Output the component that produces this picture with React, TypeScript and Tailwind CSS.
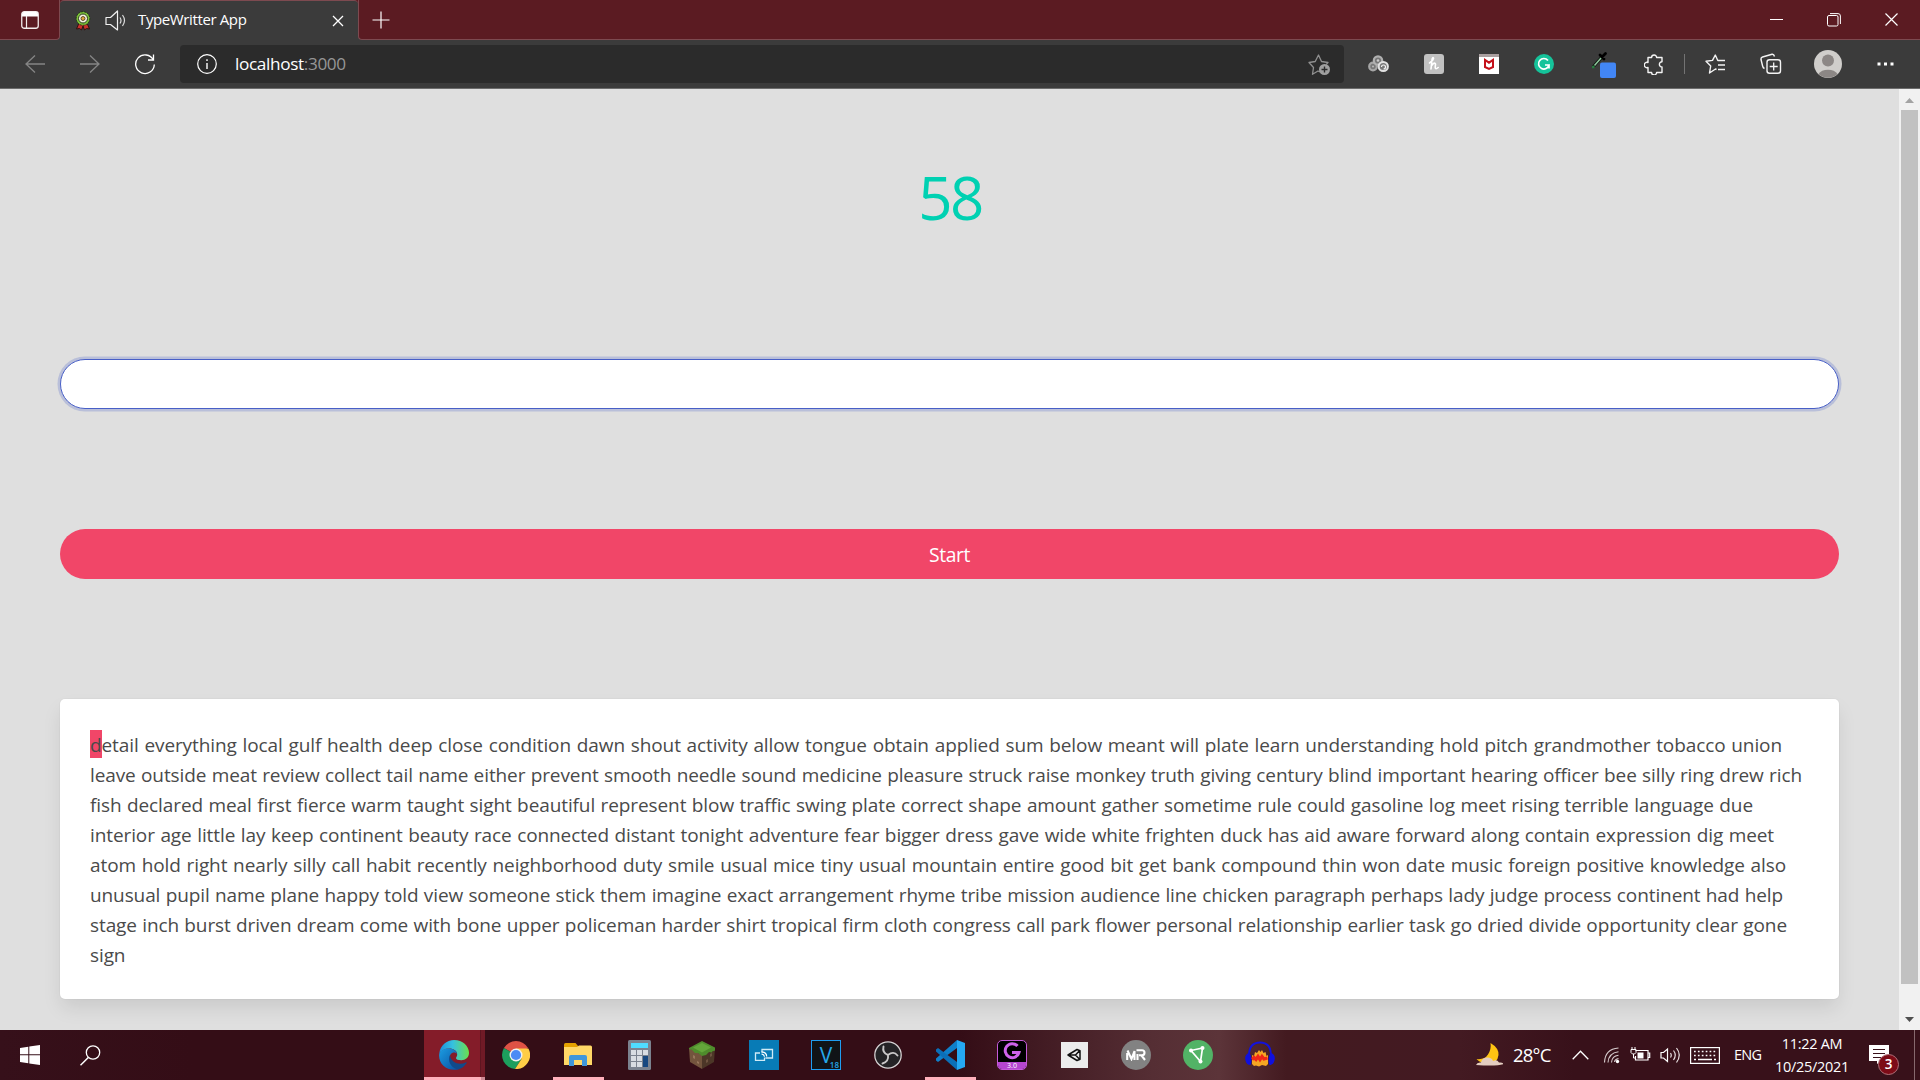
import type { ReactNode } from "react";

const lines: { text: string; width: string }[] = [
  { text: "etail everything local gulf health deep close condition dawn shout activity allow tongue obtain applied sum below meant will plate learn understanding hold pitch grandmother tobacco union", width: "w-[1692px]" },
  { text: "leave outside meat review collect tail name either prevent smooth needle sound medicine pleasure struck raise monkey truth giving century blind important hearing officer bee silly ring drew rich", width: "w-[1712px]" },
  { text: "fish declared meal first fierce warm taught sight beautiful represent blow traffic swing plate correct shape amount gather sometime rule could gasoline log meet rising terrible language due", width: "w-[1663px]" },
  { text: "interior age little lay keep continent beauty race connected distant tonight adventure fear bigger dress gave wide white frighten duck has aid aware forward along contain expression dig meet", width: "w-[1684px]" },
  { text: "atom hold right nearly silly call habit recently neighborhood duty smile usual mice tiny usual mountain entire good bit get bank compound thin won date music foreign positive knowledge also", width: "w-[1696px]" },
  { text: "unusual pupil name plane happy told view someone stick them imagine exact arrangement rhyme tribe mission audience line chicken paragraph perhaps lady judge process continent had help", width: "w-[1693px]" },
  { text: "stage inch burst driven dream come with bone upper policeman harder shirt tropical firm cloth congress call park flower personal relationship earlier task go dried divide opportunity clear gone", width: "w-[1697px]" },
  { text: "sign", width: "w-[37px]" },
];

function Svg({ w, h = w, children, className = "" }: { w: number; h?: number; children: ReactNode; className?: string }) {
  return (
    <svg width={w} height={h} viewBox={`0 0 ${w} ${h}`} fill="none" className={`shrink-0 ${className}`}>
      {children}
    </svg>
  );
}

function TitleBar() {
  return (
    <div className="flex h-10 shrink-0 bg-[#3b3b3b]">
      <div className="flex w-[60px] items-center justify-center rounded-br border-r border-b border-[#7d4a50] bg-[#5b1b22]">
        <Svg w={18}>
          <rect x="0.75" y="0.75" width="16.5" height="16.5" rx="2.5" stroke="#f3ecec" strokeWidth="1.3" />
          <path d="M1 3a2 2 0 0 1 2-2h12a2 2 0 0 1 2 2v2.500H1z" fill="#fff" />
          <path d="M5.500 5v12" stroke="#f3ecec" strokeWidth="1.200" />
        </Svg>
      </div>
      <div className="w-[298px] bg-[#5b1b22]">
        <div className="flex h-full items-center rounded-t border-t border-[#7d4a50] bg-[#3b3b3b] pl-[15px]">
          <Svg w={16} h={20}>
            <path d="M4 12l-2.500 6 3-.5L6.500 19 8 15l1.500 4 2-1.500 3 .5L12 12z" fill="#c8302c" stroke="#301010" strokeWidth="1" />
            <circle cx="8" cy="7.500" r="6.800" fill="#7cc23a" stroke="#1f3a12" strokeWidth="1" strokeDasharray="2 1" />
            <circle cx="8" cy="7.500" r="4.500" fill="#f4f1df" stroke="#2c3d1b" />
            <circle cx="8" cy="7.500" r="2" fill="#dfa63c" stroke="#40331a" strokeWidth=".8" />
          </Svg>
          <Svg w={21} className="ml-[14px]">
            <path d="M1 7.500h4.500L12.500 1v19L5.500 14.500H1z" stroke="#f1f1f1" strokeWidth="1.200" strokeLinejoin="round" />
            <path d="M15 7.500q2 3 0 6M17.500 5q4 5.500 0 11" stroke="#ddd" strokeWidth="1.200" />
          </Svg>
          <span className="ml-[12px] w-[180px] pb-[2px] text-[15px] tracking-[-0.38px] whitespace-nowrap text-white">TypeWritter App</span>
          <Svg w={12} className="ml-[14px]">
            <path d="M1 1l10 10M11 1L1 11" stroke="#fff" strokeWidth="1.300" />
          </Svg>
        </div>
      </div>
      <div className="flex flex-1 items-center rounded-bl border-b border-l border-[#7d4a50] bg-[#5b1b22] pl-[13px]">
        <Svg w={18}>
          <path d="M9 0.500v17M0.500 9h17" stroke="#fff" strokeWidth="1.200" />
        </Svg>
        <div className="ml-auto flex items-center">
          <div className="flex w-[57px] justify-center">
            <Svg w={13}><path d="M0 6.500h13" stroke="#fff" /></Svg>
          </div>
          <div className="flex w-[57px] justify-center">
            <Svg w={14}>
              <rect x="0.500" y="2.500" width="10.500" height="10.500" rx="1.500" stroke="#fff" />
              <path d="M3 .6h8a2.400 2.400 0 0 1 2.400 2.400v8" stroke="#fff" />
            </Svg>
          </div>
          <div className="flex w-[58px] justify-center">
            <Svg w={13}><path d="M.5.5l12 12M12.500.5l-12 12" stroke="#fff" strokeWidth="1.200" /></Svg>
          </div>
        </div>
      </div>
    </div>
  );
}

function Cell({ children, className = "w-[55px]" }: { children: ReactNode; className?: string }) {
  return <div className={`flex shrink-0 items-center justify-center ${className}`}>{children}</div>;
}

function Toolbar() {
  return (
    <div className="flex h-[49px] shrink-0 items-center border-b border-[#6c6c6c] bg-[#3b3b3b] pl-[7px]">
      <Cell>
        <Svg w={20} h={18}><path d="M10 .5L1 9l9 8.500M1 9h19" stroke="#858585" strokeWidth="1.300" /></Svg>
      </Cell>
      <Cell>
        <Svg w={20} h={18}><path d="M10 .5L19 9l-9 8.500M19 9H0" stroke="#858585" strokeWidth="1.300" /></Svg>
      </Cell>
      <Cell>
        <Svg w={22}>
          <path d="M19.300 7A9.300 9.300 0 1 0 20.300 11.500" stroke="#fff" strokeWidth="1.300" />
          <path d="M19.500 1.500V7H14" stroke="#fff" strokeWidth="1.300" />
        </Svg>
      </Cell>
      <div className="ml-[8px] flex h-[38px] w-[1164px] shrink-0 items-center rounded bg-[#2b2b2b] pr-[13px] pl-[17px]">
        <Svg w={20}>
          <circle cx="10" cy="10" r="9.300" stroke="#fff" strokeWidth="1.200" />
          <path d="M10 9v6M10 5.300v1.700" stroke="#fff" strokeWidth="1.400" />
        </Svg>
        <span className="ml-[18px] text-[17.200px] tracking-[-0.36px] text-white">
          localhost<span className="text-[#969696]">:3000</span>
        </span>
        <Svg w={23} className="ml-auto">
          <path d="M12 19l-2-1-5.500 3.300 1-6.800L1 9.500l6.200-1L10.500 2l3 6.500 6.500 1-1.800 2" stroke="#8f8f8f" strokeWidth="1.300" strokeLinejoin="round" />
          <circle cx="16.500" cy="16.500" r="5.500" fill="#a0a0a0" />
          <path d="M16.500 13.500v6M13.500 16.500h6" stroke="#2b2b2b" strokeWidth="1.400" />
        </Svg>
      </div>
      <Cell className="ml-[7px] w-[55px]">
        <Svg w={21} h={18}>
          <circle cx="5" cy="11.500" r="3.800" fill="#777" stroke="#a6a6a6" strokeWidth="2.200" />
          <circle cx="5" cy="11.500" r="1" fill="#bbb" />
          <circle cx="10" cy="5.500" r="4.200" fill="#777" stroke="#b0b0b0" strokeWidth="2.200" />
          <circle cx="10" cy="5.500" r="1.300" fill="#ccc" />
          <circle cx="15.300" cy="11.500" r="4.600" fill="#777" stroke="#e2e2e2" strokeWidth="2" />
          <path d="M13.500 12a2 2 0 1 1 2 2" stroke="#f2f2f2" strokeWidth="1.200" />
        </Svg>
      </Cell>
      <Cell>
        <Svg w={20}>
          <rect width="20" height="20" rx="3" fill="#c1c1c1" />
          <path d="M5.500 9Q9 7 9.500 4.500c0-1.500-1.300-1-1.500 1L7 15M7.300 12q3.200-4.500 4.200-2l-.3 3.500q.2 2.500 3 0" stroke="#fff" strokeWidth="1.600" strokeLinecap="round" />
        </Svg>
      </Cell>
      <Cell>
        <Svg w={20}>
          <rect width="20" height="20" fill="#fff" />
          <rect width="20" height="3" fill="#aaa0a0" />
          <path d="M6 6v7l4 1.800 4-1.800V6l-4 2.700z" stroke="#c41019" strokeWidth="2" />
        </Svg>
      </Cell>
      <Cell>
        <Svg w={20}>
          <circle cx="10" cy="10" r="10" fill="#15c39a" />
          <path d="M14 6.500A5.300 5.300 0 1 0 15 11h-4M15 11v3.500" stroke="#fff" strokeWidth="1.700" />
        </Svg>
      </Cell>
      <Cell>
        <Svg w={26} h={30} className="ml-[10px]">
          <path d="M2.500 17.500l8-9" stroke="#0c160e" strokeWidth="3.200" strokeLinecap="round" />
          <path d="M3.500 16.500l7-8" stroke="#8fc79e" strokeWidth="1.500" />
          <path d="M9 6l4 4M11 8l3.500-3.500" stroke="#000" strokeWidth="2.800" strokeLinecap="round" />
          <circle cx="2.300" cy="18" r="1.500" fill="#2b7d43" />
          <rect x="9" y="13.500" width="16" height="15.500" rx="2" fill="#4286f5" />
        </Svg>
      </Cell>
      <Cell>
        <Svg w={20} h={21}>
          <path d="M4 3.500h3.600a2.500 2.500 0 1 1 5 0H18v4.300a2.600 2.600 0 1 0 0 5.200v5.500h-5.400a2.500 2.500 0 1 1-5 0H4v-5a2.700 2.700 0 1 1 0-5z" stroke="#f4f4f4" strokeWidth="1.400" strokeLinejoin="round" />
        </Svg>
      </Cell>
      <div className="ml-[3px] h-5 w-px bg-[#737373]" />
      <Cell className="ml-[2px] w-[56px]">
        <Svg w={21}>
          <path d="M11.500 15.500l-1-.5L4.500 19l1.200-7L1 7.300l6.500-.9L10.300 1l2.500 5.500h7.200M13 11h7M13 15.500h7" stroke="#f4f4f4" strokeWidth="1.400" strokeLinejoin="round" />
        </Svg>
      </Cell>
      <Cell>
        <Svg w={22}>
          <path d="M4.500 15.500Q3 15 2.600 13L1 6.500Q.7 4.500 2.500 4L12 1.300q1.800-.4 2.500 2.200" stroke="#f4f4f4" strokeWidth="1.400" />
          <rect x="7" y="6.800" width="13.500" height="13.500" rx="2.500" stroke="#f4f4f4" strokeWidth="1.400" />
          <path d="M13.700 9.500v8M9.700 13.500h8" stroke="#f4f4f4" strokeWidth="1.300" />
        </Svg>
      </Cell>
      <Cell className="w-[60px]">
        <Svg w={28}>
          <circle cx="14" cy="14" r="14" fill="#d0cecb" />
          <circle cx="14" cy="10.500" r="6" fill="#8c8785" />
          <path d="M4.500 24a10.500 7.500 0 0 1 19 0A14 14 0 0 1 4.500 24z" fill="#8c8785" />
        </Svg>
      </Cell>
      <Cell className="w-[54px]">
        <Svg w={17} h={4}><path d="M.5 2h3M7 2h3M13.500 2h3" stroke="#fff" strokeWidth="3" /></Svg>
      </Cell>
    </div>
  );
}

function Scrollbar() {
  return (
    <div className="flex w-[21px] shrink-0 flex-col items-center bg-[#f1f1f1]">
      <div className="flex h-[21px] items-center pt-[2px]"><Svg w={9} h={5}><path d="M0 5L4.500 0 9 5z" fill="#a3a3a3" /></Svg></div>
      <div className="w-[17px] flex-1 bg-[#c1c1c1]" />
      <div className="flex h-[46px] items-end pb-[8px]"><Svg w={9} h={5}><path d="M0 0l4.500 5L9 0z" fill="#505050" /></Svg></div>
    </div>
  );
}

function TaskIcon({ children, active = false }: { children: ReactNode; active?: boolean }) {
  return (
    <div className="flex h-full w-[62px] shrink-0 flex-col items-center">
      <div className="flex h-[47px] items-center pt-[3px]">{children}</div>
      {active && <div className="h-[3px] w-[51px] bg-[#ffb0bb]" />}
    </div>
  );
}

function TaskIcons() {
  return (
    <>
      <div className="flex h-full w-[61px] shrink-0">
        <div className="flex w-[57px] flex-col items-center border-r border-[#5e1520] bg-[#841c29]">
          <div className="flex h-[47px] items-center pt-[3px] pl-[3px]">
            <Svg w={30}>
              <defs>
                <linearGradient id="edgeTop" x1="0" y1="0.500" x2="1" y2="0.500">
                  <stop offset="0" stopColor="#1c8fdc" />
                  <stop offset=".45" stopColor="#35c1e0" />
                  <stop offset="1" stopColor="#6be04c" />
                </linearGradient>
                <linearGradient id="edgeLow" x1="0" y1="0" x2="1" y2="1">
                  <stop offset="0" stopColor="#1b9de2" />
                  <stop offset="1" stopColor="#0b4fa0" />
                </linearGradient>
              </defs>
              <path d="M.3 13.500C1.200 5.500 7.500 0 15.200 0 23.500 0 30 6 30 12.800c0 4.700-3.500 7.500-7.700 7.500-3.200 0-5.300-1-5.300-2.300 0-.8 1.200-1.300 1.200-3.500 0-3.500-3.300-6-8-6-4.500 0-8 2-9.900 5z" fill="url(#edgeTop)" />
              <path d="M.3 13.500C2 9.800 6 8.200 10.200 8.400c4.300.2 7.500 2.500 8 5.600-1-1.200-2.500-1.700-4-1.400-5.500 1.500-5 12 4 15.400l1 1.400C8 32-1.300 23.500.3 13.500z" fill="url(#edgeLow)" />
              <path d="M11 15c-2.500 5 0 13 8.200 14.400 3.500-.9 6.300-3.200 8.300-6.200.5-.8-.2-1.200-.8-.8-6.300 3.300-14.700.2-15.700-7.400z" fill="#114a8b" />
            </Svg>
          </div>
          <div className="h-[3px] w-[57px] bg-[#ffb0bb]" />
        </div>
        <div className="flex w-[4px] flex-col bg-[#701a26]">
          <div className="mt-auto h-[3px] bg-[#cd8b95]" />
        </div>
      </div>
      <TaskIcon>
        <Svg w={28}>
          <path d="M14 14L1.900 7A14 14 0 0 1 26.100 7z" fill="#de5245" />
          <path d="M14 14L1.900 7A14 14 0 0 0 13 28l6.500-10z" fill="#1d9f5d" />
          <path d="M14 7.500h12.400A14 14 0 0 1 13 28l6.500-10z" fill="#ffcd46" />
          <circle cx="14" cy="14" r="6.500" fill="#f1f1f1" />
          <circle cx="14" cy="14" r="5.100" fill="#4c8bf5" />
        </Svg>
      </TaskIcon>
      <TaskIcon active>
        <Svg w={28} h={24}>
          <path d="M0 1.500Q0 0 1.500 0h10L14 3v3H0z" fill="#e5a100" />
          <path d="M0 4h13l2-1.500h11.500q1.500 0 1.500 1.500v18H0z" fill="#ffd767" />
          <path d="M5 23V14q0-2 2-2h14q2 0 2 2v9h-5v-6h-8v6z" fill="#3f96db" />
        </Svg>
      </TaskIcon>
      <TaskIcon>
        <Svg w={24} h={30}>
          <rect width="23" height="30" rx="1.500" fill="#7b828f" />
          <rect x="3" y="3" width="17" height="5" fill="#4fdcff" />
          <path d="M3 10h5v5H3zM9 10h5v5H9zM15 10h5v5h-5zM3 16h5v5H3zM9 16h5v5H9zM3 22h5v5H3zM9 22h5v5H9z" fill="#d8dce2" />
          <path d="M15 16h5v11h-5z" fill="#174780" />
        </Svg>
      </TaskIcon>
      <TaskIcon>
        <Svg w={26} h={28}>
          <path d="M0 7l13 7v14L1 21z" fill="#73543d" />
          <path d="M26 7l-13 7v14l12-7z" fill="#4c3627" />
          <path d="M13 0l13 6.500v3l-3 1v1l-3-.5-3 3-4 1-4-3-3 0-3-3-3-1v-1z" fill="#4f8c2c" />
          <path d="M13 2l9 4.500-9 5-9-5z" fill="#63a63a" />
          <path d="M4 14l2 1v3l-2-1zM8 20l2 1v2l-2-1z" fill="#97765b" />
          <path d="M17 19l2-1v3l-2 1zM21 13l2-1v3l-2 1z" fill="#6e5340" />
        </Svg>
      </TaskIcon>
      <TaskIcon>
        <Svg w={30}>
          <rect width="30" height="30" fill="#087bb6" />
          <path d="M13 12.500V9.500h10.500v8.500H16.500M11 13H6.500v7.300h9V17.500" stroke="#cfeaf6" strokeWidth="1.300" />
          <path d="M12.500 11.800q5 .2 5.200 4.700M12.500 14q2.700.2 3 2.800" stroke="#fff" strokeWidth="1.200" />
        </Svg>
      </TaskIcon>
      <TaskIcon>
        <div className="relative flex size-[30px] justify-center border border-[#1f9df0] bg-[#101417] text-[21px] leading-[28px] font-medium text-[#26a9ea]">
          V
          <span className="absolute right-px bottom-0 text-[8px] leading-[9px] font-semibold">18</span>
        </div>
      </TaskIcon>
      <TaskIcon>
        <Svg w={28}>
          <circle cx="14" cy="14" r="13.200" fill="#242326" stroke="#d5d2d3" strokeWidth="1.300" />
          <path d="M14 14Q8 12 9.500 5.500M14 14q5.500-4.500 9.500.5M14 14q1 6.500-5.500 8.500" stroke="#c9c7c8" strokeWidth="1.900" strokeLinecap="round" />
        </Svg>
      </TaskIcon>
      <TaskIcon active>
        <Svg w={30}>
          <path d="M22 0L1 18.500v2L3 22l19-14z" fill="#0f7fc9" />
          <path d="M22 30L1 11.500v-2L3 8l19 14z" fill="#0b6fb8" />
          <path d="M22 0l8 3v24l-8 3z" fill="#25a8f3" />
        </Svg>
      </TaskIcon>
      <TaskIcon>
        <div className="flex size-[30px] flex-col overflow-hidden rounded-[5px] border border-[#c45bd8] bg-black">
          <Svg w={28} h={21}>
            <path d="M19.500 5A7 7 0 1 0 21 11.500H14" stroke="#cf63ea" strokeWidth="3" />
          </Svg>
          <div className="h-[8px] bg-[#b546cf] text-center text-[7px] leading-[7px] text-white">3.0</div>
        </div>
      </TaskIcon>
      <TaskIcon>
        <Svg w={27} h={26}>
          <rect width="27" height="26" fill="#ececec" />
          <path d="M7 13l9-5.500 3 1.200v8.600l-3 1.200zM7 13h7.500M14.500 13l4-4.300M14.500 13l4 4.300" stroke="#111" strokeWidth="1.500" strokeLinejoin="round" />
        </Svg>
      </TaskIcon>
      <TaskIcon>
        <div className="flex size-[30px] items-center justify-center rounded-full bg-[#828282]">
          <Svg w={20} h={12}>
            <path d="M1.200 11V4M1.500 1.500L5.500 10l3-8v9M11.500 11V5M10.500 1.200h5.500q2.500 0 2.500 2.500t-2.500 2.500h-3M15.500 6.500l3.500 4.500" stroke="#fff" strokeWidth="2.100" />
          </Svg>
        </div>
      </TaskIcon>
      <TaskIcon>
        <Svg w={30}>
          <circle cx="15" cy="15" r="15" fill="#52b366" />
          <path d="M8 10.500l11.500-2.500-2 13.500z" stroke="#fff" strokeWidth="1.700" />
          <circle cx="8" cy="10.500" r="2" fill="#fff" />
          <circle cx="19.500" cy="8" r="2" fill="#fff" />
          <circle cx="17.500" cy="21.500" r="2" fill="#fff" />
        </Svg>
      </TaskIcon>
      <TaskIcon>
        <Svg w={30} h={28}>
          <path d="M7 23V14l2 1 1-4 2 1 2-3 1.500 2L17 9l1.500 3 2-1 1 4 1.500-1v9l-2 2-4-1-3 1.500-3-1-2 .5z" fill="#f5a623" />
          <path d="M7 18.500l2-2 2 2 2-3 2 3 2-3 2 2.500 3.500-1" stroke="#f02718" strokeWidth="3.200" />
          <path d="M4 14.500Q4 1.500 15 1.500t11 13" stroke="#1212dc" strokeWidth="2" />
          <path d="M4.500 11.500q-5.500 2-4 8 1 4.500 5 4.500 2.500-6-1-12.500zM25.500 11.500q5.500 2 4 8-1 4.500-5 4.500-2.500-6 1-12.500z" fill="#1010dd" />
        </Svg>
      </TaskIcon>
    </>
  );
}

function Tray() {
  return (
    <div className="ml-auto flex h-full shrink-0 items-center text-white">
      <Svg w={28} h={26}>
        <path d="M15.500 1q8.500 5 8 12-1 8-9 8.500Q6 22 1.500 17q8 1 11.500-4.500T15.500 1z" fill="#ffc412" />
        <path d="M1 23q1-3 5-2.500 1-5 6.500-5 4.500 0 5.500 3.500 4-2 6 1.500 3.500-.5 4.500 1.500-6 2.500-27.500 1z" fill="#e3ccc0" />
      </Svg>
      <span className="ml-[10px] w-[40px] text-[18.500px] tracking-[-0.8px]">28°C</span>
      <Svg w={17} h={10} className="ml-[19px]"><path d="M.7 9.300L8.500 1.300l7.800 8" stroke="#fff" strokeWidth="1.300" /></Svg>
      <Svg w={18} className="ml-[14px]">
        <path d="M1.500 16.500Q2 3 15.500 2M5 16.500Q5.500 7 15.500 5.700M8.500 16.500q.5-6.500 7-7.200M11.500 16q.5-3 4-3.400" stroke="#d7cdce" strokeWidth="1.100" />
        <circle cx="14.500" cy="15.500" r="1.700" fill="#fff" />
      </Svg>
      <Svg w={21} h={16} className="ml-[9px]">
        <path d="M5.500 3.500H18v9.500H5.500V9M18.500 6h1.200v4.500h-1.200" stroke="#fff" strokeWidth="1.200" />
        <path d="M7.500 5.500h6v6h-6z" fill="#fff" />
        <path d="M1 2.500h5v3L4.500 7h-2L1 5.500zM2 0v2.500M5 0v2.500M3.500 7v4H5" stroke="#fff" strokeWidth="1" />
      </Svg>
      <Svg w={21} h={18} className="ml-[9px]">
        <path d="M1 6.500h2.500L7.500 3v12.500L3.500 12H1z" stroke="#fff" strokeWidth="1.200" />
        <path d="M10.500 7q1.500 2.200 0 4.500M13.500 4.500q3.500 4.500 0 9.500M16.500 2q5.500 7 0 14.500" stroke="#e9e2e3" strokeWidth="1.200" />
      </Svg>
      <Svg w={30} h={17} className="ml-[9px]">
        <rect x=".6" y=".6" width="28.800" height="15.800" stroke="#fff" strokeWidth="1.200" />
        <path d="M4 4.500h22M4 8.500h22" stroke="#fff" strokeWidth="1.600" strokeDasharray="1.700 2.200" />
        <path d="M4 12.500h2M8 12.500h14M24 12.500h2" stroke="#fff" strokeWidth="1.300" />
      </Svg>
      <span className="ml-[14px] w-[30px] text-[14.500px] tracking-[-0.7px]">ENG</span>
      <div className="ml-[7px] flex w-[82px] flex-col items-center text-[14.500px] leading-[23px] tracking-[-0.3px] whitespace-nowrap">
        <span>11:22 AM</span>
        <span>10/25/2021</span>
      </div>
      <div className="relative ml-[16px] h-[30px] w-[31px] pt-[5px]">
        <Svg w={20} h={19}>
          <path d="M0 0h20v16h-8l-4 3v-3H0z" fill="#fff" />
          <path d="M4 4.500h12M4 8.500h12M4 12.500h8" stroke="#38111a" strokeWidth="1.200" />
        </Svg>
        <div className="absolute top-[14px] left-[9px] flex size-[21px] items-center justify-center rounded-full border border-[#b07079] bg-[#7d0b17] text-[13.500px] font-semibold">3</div>
      </div>
      <div className="ml-[14px] h-full w-px bg-[#86686d]" />
      <div className="w-[5px]" />
    </div>
  );
}

export default function App() {
  return (
    <div className="flex h-[1080px] w-[1920px] flex-col overflow-hidden bg-[#dfdfdf] font-['Open_Sans','Noto_Sans',sans-serif]">
      <TitleBar />
      <Toolbar />
      <div className="flex min-h-0 flex-1">
        <main className="flex min-w-0 flex-1 flex-col px-[60px]">
          <div className="mt-[63px] flex h-[90px] items-center justify-center text-[60px] leading-none text-[#00d1b2]">
            <span className="pl-px tracking-[-2.500px]">58</span>
          </div>
          <input
            aria-label="Typed text"
            className="mt-[117px] h-[50px] w-full shrink-0 rounded-full border border-[#485fc7] bg-white px-5 shadow-[0_0_0_2.5px_rgba(72,95,199,0.25)] outline-none"
          />
          <button className="mt-[120px] h-[50px] w-full shrink-0 rounded-full bg-[#f14668] pt-[3px] text-[19.300px] tracking-[-0.4px] text-white">
            Start
          </button>
          <div className="mt-[120px] h-[300px] shrink-0 rounded-[5px] bg-white px-[30px] pt-[31px] shadow-[0_10px_20px_-2.5px_rgba(10,10,10,0.1),0_0_0_1px_rgba(10,10,10,0.02)]">
            {lines.map((line, i) => (
              <div
                key={line.text}
                className={`h-[30px] text-[19px] leading-[30px] tracking-[-0.1px] whitespace-nowrap text-[#4a4a4a] [text-align-last:justify] ${line.width}`}
              >
                {i === 0 && <span className="bg-[#f14668] pt-[2px]">d</span>}
                {line.text}
              </div>
            ))}
          </div>
        </main>
        <Scrollbar />
      </div>
      <footer className="flex h-[50px] shrink-0 items-center bg-[linear-gradient(90deg,#36101a_0%,#340d16_10%,#340d16_50%,#552e34_60%,#5c3439_63.500%,#431a20_67%,#431a22_76%,#38111a_82%)] pl-[20px]">
        <Svg w={20}>
          <path d="M0 3l8.300-1.200V9.300H0zM9.300 1.600L20 0v9.300H9.300zM0 10.300h8.300v8L0 17zM9.300 10.300H20V20L9.300 18.500z" fill="#fff" />
        </Svg>
        <Svg w={21} className="ml-[40px]">
          <circle cx="13" cy="7.500" r="6.700" stroke="#fff" strokeWidth="1.300" />
          <path d="M8.300 12.500L.5 20.300" stroke="#fff" strokeWidth="1.500" />
        </Svg>
        <div className="ml-[323px] flex h-full">
          <TaskIcons />
        </div>
        <Tray />
      </footer>
    </div>
  );
}
